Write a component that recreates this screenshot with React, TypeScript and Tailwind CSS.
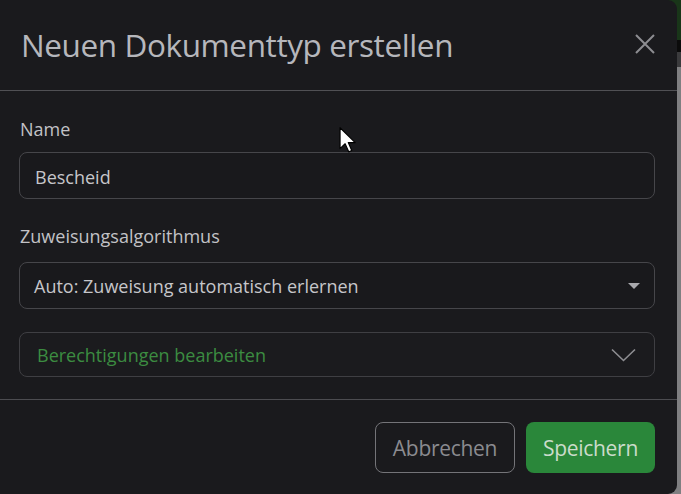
import { useState } from "react";

export default function App() {
    const [name, setName] = useState("Bescheid");
    const [open, setOpen] = useState(false);

    return (
        <div className="w-[681px] h-[494px] overflow-hidden bg-[linear-gradient(to_bottom,#193619_0px,#193619_40px,#0b0b0b_40px,#0b0b0b_52px,#3b3b3d_52px,#3b3b3d_67px,#7f7f81_67px)] font-['Open_Sans','Noto_Sans',sans-serif]">
            <div className="relative w-[677px] h-[494px] bg-[#1a1a1d] rounded-r-[9px] flex flex-col">
                {/* 标题栏 */}
                <div className="h-[91px] shrink-0 border-b border-[#505054] flex items-center justify-between pl-[21px] pr-[22px]">
                    <h5 className="text-[31.5px] leading-[40px] tracking-[-0.4px] text-[#b6b7bc] pb-[1px]">Neuen Dokumenttyp erstellen</h5>
                    <button className="w-[20px] h-[20px] mb-[3px] flex items-center justify-center text-[#8d8d91]" aria-label="Close">
                        <svg width="20" height="20" viewBox="0 0 20 20" fill="none" stroke="currentColor" strokeWidth="2">
                            <path d="M1 1L19 19M19 1L1 19" />
                        </svg>
                    </button>
                </div>

                {/* 表单 */}
                <div className="pl-[19px] pr-[22px] pt-[26px] pb-[22px] flex flex-col">
                    <label className="block text-[18px] leading-[24px] text-[#c2c2c6] pl-[1px]">Name</label>
                    <input
                        type="text"
                        value={name}
                        onChange={(e) => setName(e.target.value)}
                        className="mt-[11px] h-[47px] w-full px-[15px] pt-[2px] bg-[#19191c] border border-[#46464a] rounded-[8px] text-[18px] text-[#c6c6ca] outline-none"
                    />

                    <label className="block mt-[25px] text-[18px] leading-[24px] text-[#c2c2c6] pl-[1px]">Zuweisungsalgorithmus</label>
                    <div className="mt-[14px] h-[47px] w-full pl-[14px] pr-[14px] bg-[#19191c] border border-[#46464a] rounded-[8px] flex items-center justify-between">
                        <span className="text-[18px] leading-[24px] text-[#c6c6ca]">Auto: Zuweisung automatisch erlernen</span>
                        <svg width="12" height="6" viewBox="0 0 12 6" className="mt-[1px]">
                            <polygon points="0,0 12,0 6,6" fill="#a9a9ad" />
                        </svg>
                    </div>

                    <button
                        onClick={() => setOpen(!open)}
                        className="mt-[23px] h-[45px] w-full pl-[17px] pr-[18px] bg-[#1b1b1e] border border-[#3f3f43] rounded-[8px] flex items-center justify-between"
                    >
                        <span className="text-[18px] leading-[24px] text-[#3c8c41]">Berechtigungen bearbeiten</span>
                        <svg width="25" height="14" viewBox="0 0 25 14" fill="none" stroke="#8e8e92" strokeWidth="1.6">
                            <path d="M1 1.5L12.5 12.5L24 1.5" />
                        </svg>
                    </button>
                </div>

                {/* 底部按钮 */}
                <div className="border-t border-[#4c4c50] pt-[22px] pr-[22px] flex justify-end gap-[11px]">
                    <button className="w-[140px] h-[51px] pt-[3px] rounded-[8px] border border-[#747478] text-[21px] tracking-[-0.3px] text-[#8b8b90]">Abbrechen</button>
                    <button className="w-[129px] h-[51px] pt-[3px] rounded-[8px] bg-[#2a873a] text-[21px] tracking-[-0.3px] text-[#cbdccb]">Speichern</button>
                </div>

                {/* 鼠标指针 */}
                <svg className="absolute left-[339px] top-[127px] pointer-events-none" width="18" height="26" viewBox="0 0 12 18">
                    <path d="M0.5 0.5L0.5 15L4 11.6L6.5 17.2L8.6 16.3L6.2 10.8L11 10.8Z" fill="#ffffff" stroke="#000000" strokeWidth="0.8" strokeLinejoin="round" />
                </svg>
            </div>
        </div>
    );
}
